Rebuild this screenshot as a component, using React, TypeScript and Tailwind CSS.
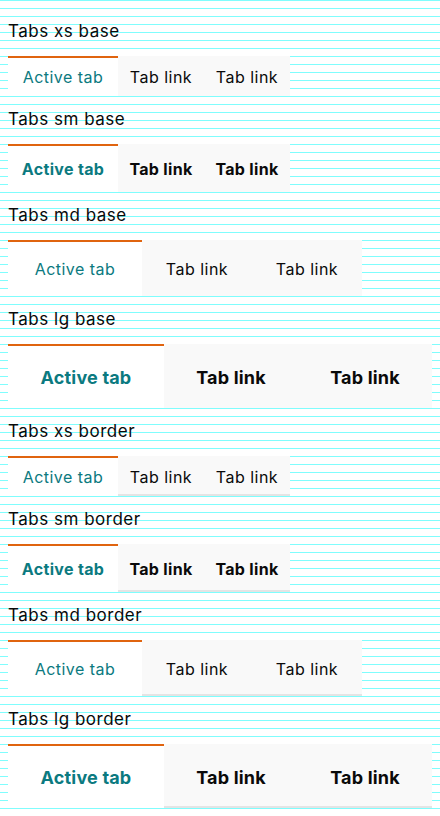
import React from 'react';

type Size = 'xs' | 'sm' | 'md' | 'lg';
type Variant = 'base' | 'border';

const sizeStyles: Record<Size, { height: string; text: string; active: string; link: string }> = {
  xs: { height: 'h-10', text: 'text-[16px] font-normal tracking-[0.03em]', active: 'w-[110px]', link: 'w-[86px]' },
  sm: { height: 'h-12', text: 'text-[16px] font-bold tracking-[0.02em]', active: 'w-[110px]', link: 'w-[86px]' },
  md: { height: 'h-14', text: 'text-[16px] font-normal tracking-[0.03em]', active: 'w-[134px]', link: 'w-[110px]' },
  lg: { height: 'h-16', text: 'text-[18px] font-bold tracking-[0.01em]', active: 'w-[156px]', link: 'w-[134px]' },
};

const Tabs: React.FC<{ size: Size; variant: Variant }> = ({ size, variant }) => {
  const s = sizeStyles[size];
  const tabs = ['Active tab', 'Tab link', 'Tab link'];

  return (
    <div className="flex" role="tablist">
      {tabs.map((label, i) => {
        const active = i === 0;
        return (
          <div
            key={i}
            role="tab"
            className={[
              'flex items-center justify-center border-t-2',
              s.height,
              s.text,
              active
                ? `${s.active} bg-white border-[#e0640f] text-[#0b7a80]`
                : `${s.link} bg-[#f9f9f9] border-transparent text-[#0a0a0a]`,
              !active && variant === 'border' ? 'shadow-[inset_0_-2px_0_#e4e4e4]' : '',
            ].join(' ')}
          >
            {label}
          </div>
        );
      })}
    </div>
  );
};

const sections: { size: Size; variant: Variant }[] = [
  { size: 'xs', variant: 'base' },
  { size: 'sm', variant: 'base' },
  { size: 'md', variant: 'base' },
  { size: 'lg', variant: 'base' },
  { size: 'xs', variant: 'border' },
  { size: 'sm', variant: 'border' },
  { size: 'md', variant: 'border' },
  { size: 'lg', variant: 'border' },
];

export default function App() {
  return (
    <div className="min-h-[816px] bg-white bg-[linear-gradient(to_bottom,#80fdfd_1px,transparent_1px)] bg-[length:100%_8px] pt-2 px-2 font-['Inter',sans-serif] text-[#0a0a0a]">
      {sections.map((sec, i) => (
        <section key={i}>
          <h2 className="h-12 flex items-center text-[17px] font-normal tracking-[0.03em]">
            Tabs {sec.size} {sec.variant}
          </h2>
          <Tabs size={sec.size} variant={sec.variant} />
        </section>
      ))}
    </div>
  );
}
